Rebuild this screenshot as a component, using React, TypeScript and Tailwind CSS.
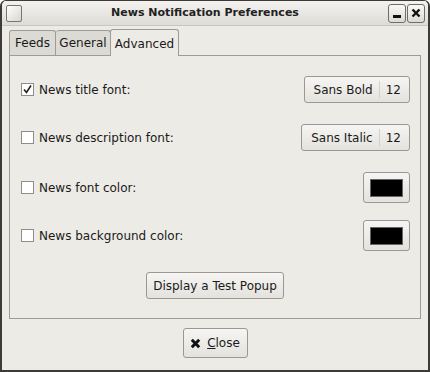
import React from 'react';

const font = { fontFamily: '"DejaVu Sans", Verdana, sans-serif' };

const Check = ({ checked }: { checked?: boolean }) => (
  <span className="w-[13px] h-[13px] border border-[#8f8d89] bg-white flex items-center justify-center">
    {checked && (
      <svg width="11" height="11" viewBox="0 0 11 11">
        <path d="M2 5.5 L4.5 8.5 L9 1.5" fill="none" stroke="#222" strokeWidth="1.6" />
      </svg>
    )}
  </span>
);

const FontButton = ({ name }: { name: string }) => (
  <button className="h-[27px] flex items-center pl-[9px] pr-[8px] rounded-[3px] border border-[#9a9893] bg-gradient-to-b from-[#f6f5f3] to-[#e4e2dd] text-[12px] text-[#1a1a1a]">
    <span>{name}</span>
    <span className="mx-[6px] w-px h-[17px] bg-[#d2d0cb]" />
    <span>12</span>
  </button>
);

const ColorButton = () => (
  <button className="w-[47px] h-[31px] flex items-center justify-center rounded-[3px] border border-[#9a9893] bg-gradient-to-b from-[#f6f5f3] to-[#e4e2dd]">
    <span className="w-[33px] h-[18px] bg-black border border-[#666]" />
  </button>
);

const Row = ({ label, checked, right, className }: { label: string; checked?: boolean; right: React.ReactNode; className: string }) => (
  <div className={`flex items-center justify-between h-[31px] pl-[11px] pr-[10px] ${className}`}>
    <div className="flex items-center gap-[5px] text-[12px] text-[#1a1a1a]">
      <Check checked={checked} />
      <span>{label}</span>
    </div>
    {right}
  </div>
);

export default function App() {
  return (
    <div style={font} className="w-[430px] h-[372px] bg-[#edebe6] border-x-2 border-b-2 border-t border-[#3c3b38] rounded-t-[6px] flex flex-col overflow-hidden">
      {/* title bar */}
      <div className="h-[25px] shrink-0 flex items-center px-[3px] bg-gradient-to-b from-[#f3f2ef] to-[#dedcd7] border-b border-[#c9c7c2]">
        <div className="w-[16px] h-[17px] ml-[1px] rounded-[2px] border border-[#77756f] bg-gradient-to-br from-white to-[#d8d6d1]" />
        <div className="flex-1 text-center text-[11px] font-bold text-[#222]">News Notification Preferences</div>
        <div className="flex gap-[1px]">
          <div className="w-[18px] h-[19px] rounded-[3px] border border-[#6f6d68] bg-gradient-to-b from-[#faf9f7] to-[#dcdad5] flex items-end justify-center pb-[4px]">
            <span className="w-[8px] h-[3px] bg-[#111]" />
          </div>
          <div className="w-[18px] h-[19px] rounded-[3px] border border-[#6f6d68] bg-gradient-to-b from-[#faf9f7] to-[#dcdad5] flex items-center justify-center">
            <svg width="10" height="10" viewBox="0 0 10 10">
              <path d="M1.5 1.5 L8.5 8.5 M8.5 1.5 L1.5 8.5" stroke="#111" strokeWidth="2.4" />
            </svg>
          </div>
        </div>
      </div>

      {/* notebook */}
      <div className="px-[7px] pt-[2px] flex flex-col">
        <div className="flex items-end h-[27px] relative z-10 text-[12px] text-[#1a1a1a]">
          <div className="h-[25px] w-[47px] justify-center flex items-center border border-b-0 border-[#9d9b96] rounded-t-[3px] bg-[#dcdad5]">Feeds</div>
          <div className="h-[25px] w-[55px] justify-center flex items-center border border-l-0 border-b-0 border-[#9d9b96] rounded-t-[3px] bg-[#dcdad5]">General</div>
          <div className="h-[27px] w-[69px] justify-center flex items-center border border-b-0 border-[#9d9b96] rounded-t-[3px] bg-[#edebe6] -mb-px -ml-px pt-[1px]">Advanced</div>
        </div>
        <div className="h-[264px] border border-[#9d9b96] bg-[#edebe6] flex flex-col">
          <Row className="mt-[18px]" label="News title font:" checked right={<FontButton name="Sans Bold" />} />
          <Row className="mt-[17px]" label="News description font:" right={<FontButton name="Sans Italic" />} />
          <Row className="mt-[19px]" label="News font color:" right={<ColorButton />} />
          <Row className="mt-[17px]" label="News background color:" right={<ColorButton />} />
          <div className="flex justify-center mt-[21px]">
            <button className="h-[27px] px-[6px] rounded-[3px] border border-[#9a9893] bg-gradient-to-b from-[#f6f5f3] to-[#e4e2dd] text-[12px] text-[#1a1a1a]">
              Display a Test Popup
            </button>
          </div>
        </div>
      </div>

      {/* footer */}
      <div className="flex justify-center pt-[9px]">
        <button className="h-[30px] w-[65px] flex items-center justify-center gap-[6px] rounded-[3px] border border-[#9a9893] bg-gradient-to-b from-[#f6f5f3] to-[#e4e2dd] text-[12px] text-[#1a1a1a]">
          <svg width="11" height="11" viewBox="0 0 11 11">
            <path d="M1.8 1.8 L9.2 9.2 M9.2 1.8 L1.8 9.2" stroke="#111" strokeWidth="3" />
          </svg>
          <span><span className="underline">C</span>lose</span>
        </button>
      </div>
    </div>
  );
}
